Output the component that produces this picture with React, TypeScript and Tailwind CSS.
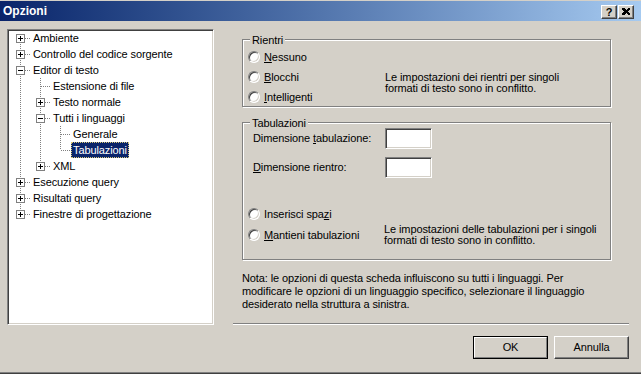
import React from 'react';

type Row = {
  label: string;
  level: number;
  box?: '+' | '-';
  first?: boolean;
  last?: boolean;
  anc: boolean[];
  selected?: boolean;
};

// tree rows, anc = whether each ancestor level still has a line going down
const rows: Row[] = [
  { label: 'Ambiente', level: 0, box: '+', first: true, anc: [] },
  { label: 'Controllo del codice sorgente', level: 0, box: '+', anc: [] },
  { label: 'Editor di testo', level: 0, box: '-', anc: [] },
  { label: 'Estensione di file', level: 1, anc: [true] },
  { label: 'Testo normale', level: 1, box: '+', anc: [true] },
  { label: 'Tutti i linguaggi', level: 1, box: '-', anc: [true] },
  { label: 'Generale', level: 2, anc: [true, true] },
  { label: 'Tabulazioni', level: 2, last: true, anc: [true, true], selected: true },
  { label: 'XML', level: 1, box: '+', last: true, anc: [true] },
  { label: 'Esecuzione query', level: 0, box: '+', anc: [] },
  { label: 'Risultati query', level: 0, box: '+', anc: [] },
  { label: 'Finestre di progettazione', level: 0, box: '+', last: true, anc: [] },
];

const AncCell = ({ on }: { on: boolean }) => (
  <svg width="20" height="16" className="shrink-0">
    {on && (
      <line x1="10.5" y1="0" x2="10.5" y2="16" stroke="#808080" strokeDasharray="1 1" shapeRendering="crispEdges" />
    )}
  </svg>
);

const OwnCell = ({ row }: { row: Row }) => (
  <svg width="20" height="16" className="shrink-0">
    <g stroke="#808080" strokeDasharray="1 1" shapeRendering="crispEdges">
      {!row.first && <line x1="10.5" y1="0" x2="10.5" y2="8" />}
      {!row.last && <line x1="10.5" y1="8" x2="10.5" y2="16" />}
      <line x1="11" y1="8.5" x2="21" y2="8.5" />
    </g>
    {row.box && (
      <g shapeRendering="crispEdges">
        <rect x="6.5" y="4.5" width="8" height="8" fill="#fff" stroke="#808080" />
        <line x1="8" y1="8.5" x2="13" y2="8.5" stroke="#000" />
        {row.box === '+' && <line x1="10.5" y1="6" x2="10.5" y2="11" stroke="#000" />}
      </g>
    )}
  </svg>
);

const Radio = () => (
  <span className="inline-block size-[12px] shrink-0 rounded-full bg-white border border-t-[#808080] border-l-[#808080] border-b-white border-r-white shadow-[inset_1px_1px_0_#404040,inset_-1px_-1px_0_#d4d0c8]" />
);

const RadioRow = ({ children }: { children: React.ReactNode }) => (
  <div className="flex h-[20px] items-center gap-[4px] whitespace-nowrap">
    <Radio />
    <span>{children}</span>
  </div>
);

const TextBox = () => (
  <div className="w-[47px] h-[21px] bg-white border border-t-[#808080] border-l-[#808080] border-b-white border-r-white shadow-[inset_1px_1px_0_#404040,inset_-1px_-1px_0_#d4d0c8]" />
);

const Group = ({ title, className, children }: { title: string; className: string; children: React.ReactNode }) => (
  <div className={`relative ml-[9px] w-[369px] border border-[#808080] shadow-[1px_1px_0_#fff,inset_1px_1px_0_#fff] ${className}`}>
    <span className="absolute left-[7px] top-[-6px] px-[2px] bg-[#d4d0c8] leading-[13px]">{title}</span>
    {children}
  </div>
);

const CaptionButton = ({ children }: { children: React.ReactNode }) => (
  <div className="flex w-[16px] h-[14px] items-center justify-center bg-[#d4d0c8] border-t border-l border-white border-b border-r border-b-[#404040] border-r-[#404040] shadow-[inset_-1px_-1px_0_#808080]">
    {children}
  </div>
);

export default function App() {
  return (
    <div className="font-['Liberation_Sans',Arial,sans-serif] text-[11px] tracking-[-0.1px] text-black w-[641px] h-[374px] overflow-hidden bg-[#d4d0c8] shadow-[inset_0_-1px_0_#404040,inset_0_-2px_0_#808080]">
      {/* title bar */}
      <div className="mt-[1px] h-[20px] flex items-center justify-between bg-linear-to-r from-[#0a246a] to-[#a6caf0] pl-[3px] pr-[7px]">
        <span className="font-bold text-white text-[12px] tracking-normal leading-[13px]">Opzioni</span>
        <div className="flex gap-[1px] mt-[1px]">
          <CaptionButton>
            <span className="font-bold text-[11px] leading-[10px]">?</span>
          </CaptionButton>
          <CaptionButton>
            <svg width="8" height="7" shapeRendering="crispEdges">
              <path d="M0 0h2l2 2l2-2h2v1l-2 2.5l2 2.5v1h-2l-2-2l-2 2h-2v-1l2-2.5l-2-2.5z" fill="#000" />
            </svg>
          </CaptionButton>
        </div>
      </div>

      <div className="flex items-start">
        {/* tree */}
        <div className="ml-[7px] mt-[8px] w-[207px] h-[296px] shrink-0 bg-white pl-[2px] border border-t-[#808080] border-l-[#808080] border-b-white border-r-white shadow-[inset_1px_1px_0_#404040,inset_-1px_-1px_0_#d4d0c8]">
          {rows.map((r) => (
            <div key={r.label} className="flex h-[16px] items-center">
              {r.anc.map((a, i) => (
                <AncCell key={i} on={a} />
              ))}
              <OwnCell row={r} />
              <span
                className={`ml-[1px] px-[2px] leading-[16px] whitespace-nowrap ${
                  r.selected ? 'bg-[#0a246a] text-white outline-1 outline-dotted outline-[#d8c878] -outline-offset-1' : ''
                }`}
              >
                {r.label}
              </span>
            </div>
          ))}
        </div>

        {/* right side */}
        <div className="ml-[19px] w-[396px] flex flex-col">
          <Group title="Rientri" className="mt-[18px] h-[68px]">
            <div className="flex pl-[5px] pt-[7px]">
              <div className="w-[137px] flex flex-col">
                <RadioRow><span className="underline">N</span>essuno</RadioRow>
                <RadioRow><span className="underline">B</span>locchi</RadioRow>
                <RadioRow><span className="underline">I</span>ntelligenti</RadioRow>
              </div>
              <div className="mt-[25px] leading-[11px]">
                Le impostazioni dei rientri per singoli
                <br />
                formati di testo sono in conflitto.
              </div>
            </div>
          </Group>

          <Group title="Tabulazioni" className="mt-[15px] h-[138px]">
            <div className="pl-[10px] pt-[5px]">
              <div className="flex h-[21px] items-center">
                <span className="w-[132px]">
                  Dimensione <span className="underline">t</span>abulazione:
                </span>
                <TextBox />
              </div>
              <div className="mt-[8px] flex h-[21px] items-center">
                <span className="w-[132px]">
                  <span className="underline">D</span>imensione rientro:
                </span>
                <TextBox />
              </div>
            </div>
            <div className="mt-[26px] flex pl-[5px]">
              <div className="w-[136px] flex flex-col gap-[1px]">
                <RadioRow>Inserisci spa<span className="underline">z</span>i</RadioRow>
                <RadioRow><span className="underline">M</span>antieni tabulazioni</RadioRow>
              </div>
              <div className="mt-[20px] leading-[11px]">
                Le impostazioni delle tabulazioni per i singoli
                <br />
                formati di testo sono in conflitto.
              </div>
            </div>
          </Group>

          <p className="mt-[12px] ml-[9px] leading-[13px]">
            Nota: le opzioni di questa scheda influiscono su tutti i linguaggi. Per
            <br />
            modificare le opzioni di un linguaggio specifico, selezionare il linguaggio
            <br />
            desiderato nella struttura a sinistra.
          </p>

          <div className="mt-[12px] h-px bg-[#808080]" />
          <div className="h-px bg-white" />

          <div className="mt-[11px] flex justify-end gap-[6px]">
            <div className="border border-black">
              <button className="w-[73px] h-[21px] bg-[#d4d0c8] border-t border-l border-white border-b border-r border-b-[#808080] border-r-[#808080]">
                OK
              </button>
            </div>
            <button className="w-[75px] h-[23px] bg-[#d4d0c8] border-t border-l border-white border-b border-r border-b-[#404040] border-r-[#404040] shadow-[inset_-1px_-1px_0_#808080]">
              Annulla
            </button>
          </div>
        </div>
      </div>
    </div>
  );
}
